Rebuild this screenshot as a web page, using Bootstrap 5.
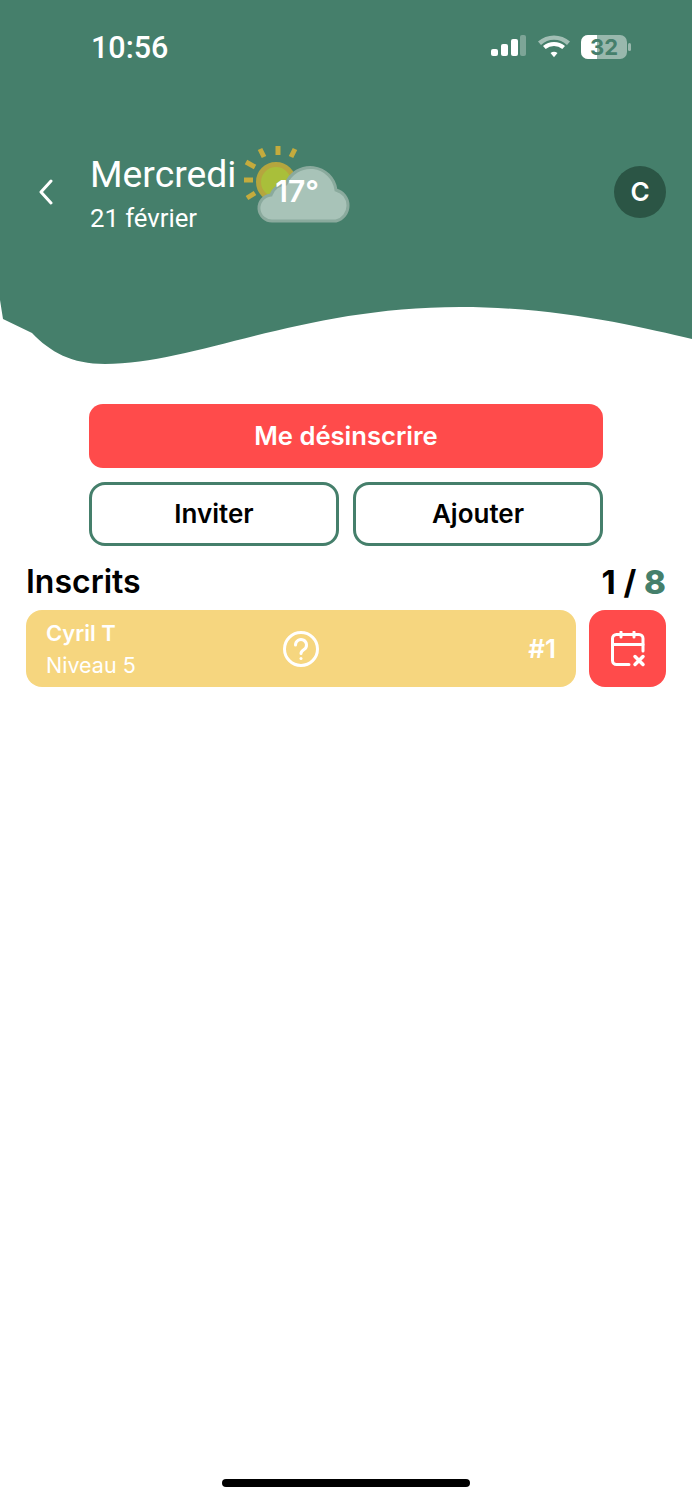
<!DOCTYPE html>
<html lang="fr">
<head>
    <meta charset="UTF-8">
    <meta name="viewport" content="width=device-width, initial-scale=1.0">
    <title>Inscrits</title>
    <link href="https://cdn.jsdelivr.net/npm/bootstrap@5.3.0/dist/css/bootstrap.min.css" rel="stylesheet">
    <style>
        body {
            font-family: Inter, "Liberation Sans", sans-serif;
            min-height: 1500px;
            background: #fff;
            color: #000;
        }
        .hero {
            height: 404px;
            color: #fff;
        }
        .hero-bg {
            position: absolute;
            top: 0;
            left: 0;
            z-index: -1;
        }
        .status-row {
            height: 94px;
            padding: 0 61px 0 91px;
        }
        .status-time {
            font-family: Roboto, sans-serif;
            font-size: 30.5px;
            font-weight: 500;
            line-height: 1;
            width: 100px;
            padding-top: 2px;
        }
        .title-row {
            height: 95px;
            margin-top: 50px;
            padding: 0 26px 0 38px;
        }
        .back-icon {
            margin-right: 36px;
        }
        .day-block {
            padding-top: 3px;
        }
        .day-name {
            font-family: Roboto, sans-serif;
            font-size: 37.3px;
            line-height: 46px;
        }
        .day-date {
            font-family: Roboto, sans-serif;
            font-size: 25.7px;
            line-height: 36px;
            margin-top: 3px;
        }
        .weather {
            width: 110px;
            height: 80px;
            margin-left: 8px;
            align-self: flex-start;
        }
        .weather-temp {
            position: absolute;
            left: 31px;
            top: 29px;
            font-size: 30px;
            font-weight: 600;
            line-height: 36px;
        }
        .avatar {
            width: 52px;
            height: 52px;
            background: #2b5545;
            font-size: 26px;
            font-weight: 600;
        }
        .actions {
            padding: 0 89px;
        }
        .btn-main {
            height: 64px;
            background: #ff4b4b;
            border: 0;
            border-radius: 14px;
            color: #fff;
            font-size: 25.6px;
            font-weight: 600;
            padding: 0;
        }
        .btn-main:hover {
            background: #ff4b4b;
            color: #fff;
        }
        .btn-line {
            height: 64px;
            background: #fff;
            border: 3px solid #457f6b;
            border-radius: 16px;
            color: #000;
            font-size: 26px;
            font-weight: 600;
            padding: 0 0 2px;
        }
        .gap-btn {
            gap: 14px;
        }
        .list-head {
            padding: 0 26px;
            margin-top: 16px;
            height: 40px;
        }
        .list-title {
            font-size: 32px;
            font-weight: 600;
            line-height: 40px;
        }
        .list-count {
            font-size: 33px;
            font-weight: 700;
            line-height: 40px;
        }
        .count-max {
            color: #457f6b;
            font-weight: 800;
        }
        .player-row {
            padding: 0 26px;
            margin-top: 8px;
            gap: 13px;
        }
        .player-card {
            height: 77px;
            background: #f6d67f;
            border-radius: 16px;
            padding: 0 20px;
            color: #fff;
        }
        .player-name {
            font-size: 22px;
            font-weight: 600;
            line-height: 32px;
        }
        .player-level {
            font-size: 21.5px;
            line-height: 32px;
        }
        .player-info {
            width: 237px;
        }
        .player-num {
            font-size: 26px;
            font-weight: 600;
        }
        .btn-cancel {
            width: 77px;
            height: 77px;
            background: #ff4b4b;
            border: 0;
            border-radius: 16px;
            padding: 0;
        }
        .btn-cancel:hover {
            background: #ff4b4b;
        }
        .home-bar {
            width: 248px;
            height: 8px;
            margin-bottom: 13px;
            background: #000;
        }
    </style>
</head>
<body class="d-flex flex-column">

    <!-- Header -->
    <header class="hero position-relative">
        <svg class="hero-bg" width="692" height="370" viewBox="0 0 692 370">
            <path fill="#457f6b" d="M0 0H692V339C640 327 560 307 460 307C300 307 195 364 105 364C72 364 50 352 32 333L3 319L0 300Z"/>
        </svg>

        <div class="status-row d-flex align-items-center justify-content-between">
            <div class="status-time">10:56</div>
            <svg width="140" height="26" viewBox="0 0 140 26">
                <g fill="#fff">
                    <rect x="0" y="15" width="7" height="7" rx="2"/>
                    <rect x="10" y="10" width="7" height="12" rx="2"/>
                    <rect x="20" y="5" width="7" height="17" rx="2"/>
                    <rect x="29" y="1" width="6" height="21" rx="2" opacity=".3"/>
                    <path d="M59.500 19a6 6 0 0 1 7 0l-3.500 4.200z"/>
                    <path d="M47 7.500a24 24 0 0 1 32 0l-3 3.500a19 19 0 0 0-26 0z" opacity=".5"/>
                    <path d="M52 12a17 17 0 0 1 22 0l-2.700 3a13 13 0 0 0-16.600 0z"/>
                    <rect x="90" y="1" width="46" height="24" rx="7" opacity=".45"/>
                    <path d="M97 1h9v24h-9a7 7 0 0 1-7-7V8a7 7 0 0 1 7-7z"/>
                    <rect x="137" y="9" width="3" height="8" rx="1.500" opacity=".45"/>
                </g>
                <text x="113" y="21" text-anchor="middle" font-family="Inter, sans-serif" font-size="22" font-weight="700" fill="#457f6b">32</text>
            </svg>
        </div>

        <div class="title-row d-flex align-items-center">
            <svg class="back-icon" width="16" height="26" viewBox="0 0 16 26">
                <path d="M13 2 3 13l10 11" fill="none" stroke="#fff" stroke-width="3" stroke-linecap="round" stroke-linejoin="round"/>
            </svg>
            <div class="day-block">
                <div class="day-name">Mercredi</div>
                <div class="day-date">21 février</div>
            </div>
            <div class="weather position-relative">
                <svg width="110" height="80" viewBox="0 0 110 80">
                    <path d="M34 2v9M16 5l4 8M51 5l-4 8M2 18l9 5M0 36h9M3 54l8-5" stroke="#c4ab3d" stroke-width="5"/>
                    <circle cx="32" cy="38" r="17.500" fill="#a9bf3a" stroke="#b5a63e" stroke-width="5"/>
                    <path d="M29 77a13 13 0 0 1-2-26a16 16 0 0 1 15-11a26 26 0 0 1 50 6a16 16 0 0 1 0 31z" fill="#a8c3b8" stroke="#8aaa9d" stroke-width="3"/>
                </svg>
                <div class="weather-temp">17°</div>
            </div>
            <div class="avatar ms-auto rounded-circle d-flex align-items-center justify-content-center">C</div>
        </div>
    </header>

    <!-- Actions -->
    <div class="actions d-flex flex-column gap-btn">
        <button class="btn btn-main w-100">Me désinscrire</button>
        <div class="d-flex gap-btn">
            <button class="btn btn-line flex-fill w-50">Inviter</button>
            <button class="btn btn-line flex-fill w-50">Ajouter</button>
        </div>
    </div>

    <!-- Liste -->
    <div class="list-head d-flex justify-content-between align-items-center">
        <div class="list-title">Inscrits</div>
        <div class="list-count">1 / <span class="count-max">8</span></div>
    </div>
    <div class="player-row d-flex">
        <div class="player-card flex-grow-1 d-flex align-items-center">
            <div class="player-info">
                <div class="player-name">Cyril T</div>
                <div class="player-level">Niveau 5</div>
            </div>
            <svg width="36" height="36" viewBox="0 0 36 36" fill="none" stroke="#fff" stroke-width="3" stroke-linecap="round">
                <circle cx="18" cy="18" r="16.500"/>
                <path d="M12.500 14a5.500 5.500 0 1 1 8.500 4.600c-2 1.300-3 2.200-3 4"/>
                <path d="M18 27.500v.1"/>
            </svg>
            <div class="player-num ms-auto">#1</div>
        </div>
        <button class="btn btn-cancel d-flex align-items-center justify-content-center">
            <svg width="36" height="36" viewBox="0 0 36 36" fill="none" stroke="#fff" stroke-width="3" stroke-linecap="round" stroke-linejoin="round">
                <path d="M19 33.500H6.500a4 4 0 0 1-4-4v-22a4 4 0 0 1 4-4h22.500a4 4 0 0 1 4 4V20"/>
                <path d="M2.500 13.500H33M11 1v5M24 1v5"/>
                <path d="M25 25.500l8 8M33 25.500l-8 8" stroke-width="3.500"/>
            </svg>
        </button>
    </div>

    <div class="home-bar mt-auto mx-auto rounded-pill"></div>

    <script src="https://cdn.jsdelivr.net/npm/bootstrap@5.3.0/dist/js/bootstrap.bundle.min.js"></script>
</body>
</html>
